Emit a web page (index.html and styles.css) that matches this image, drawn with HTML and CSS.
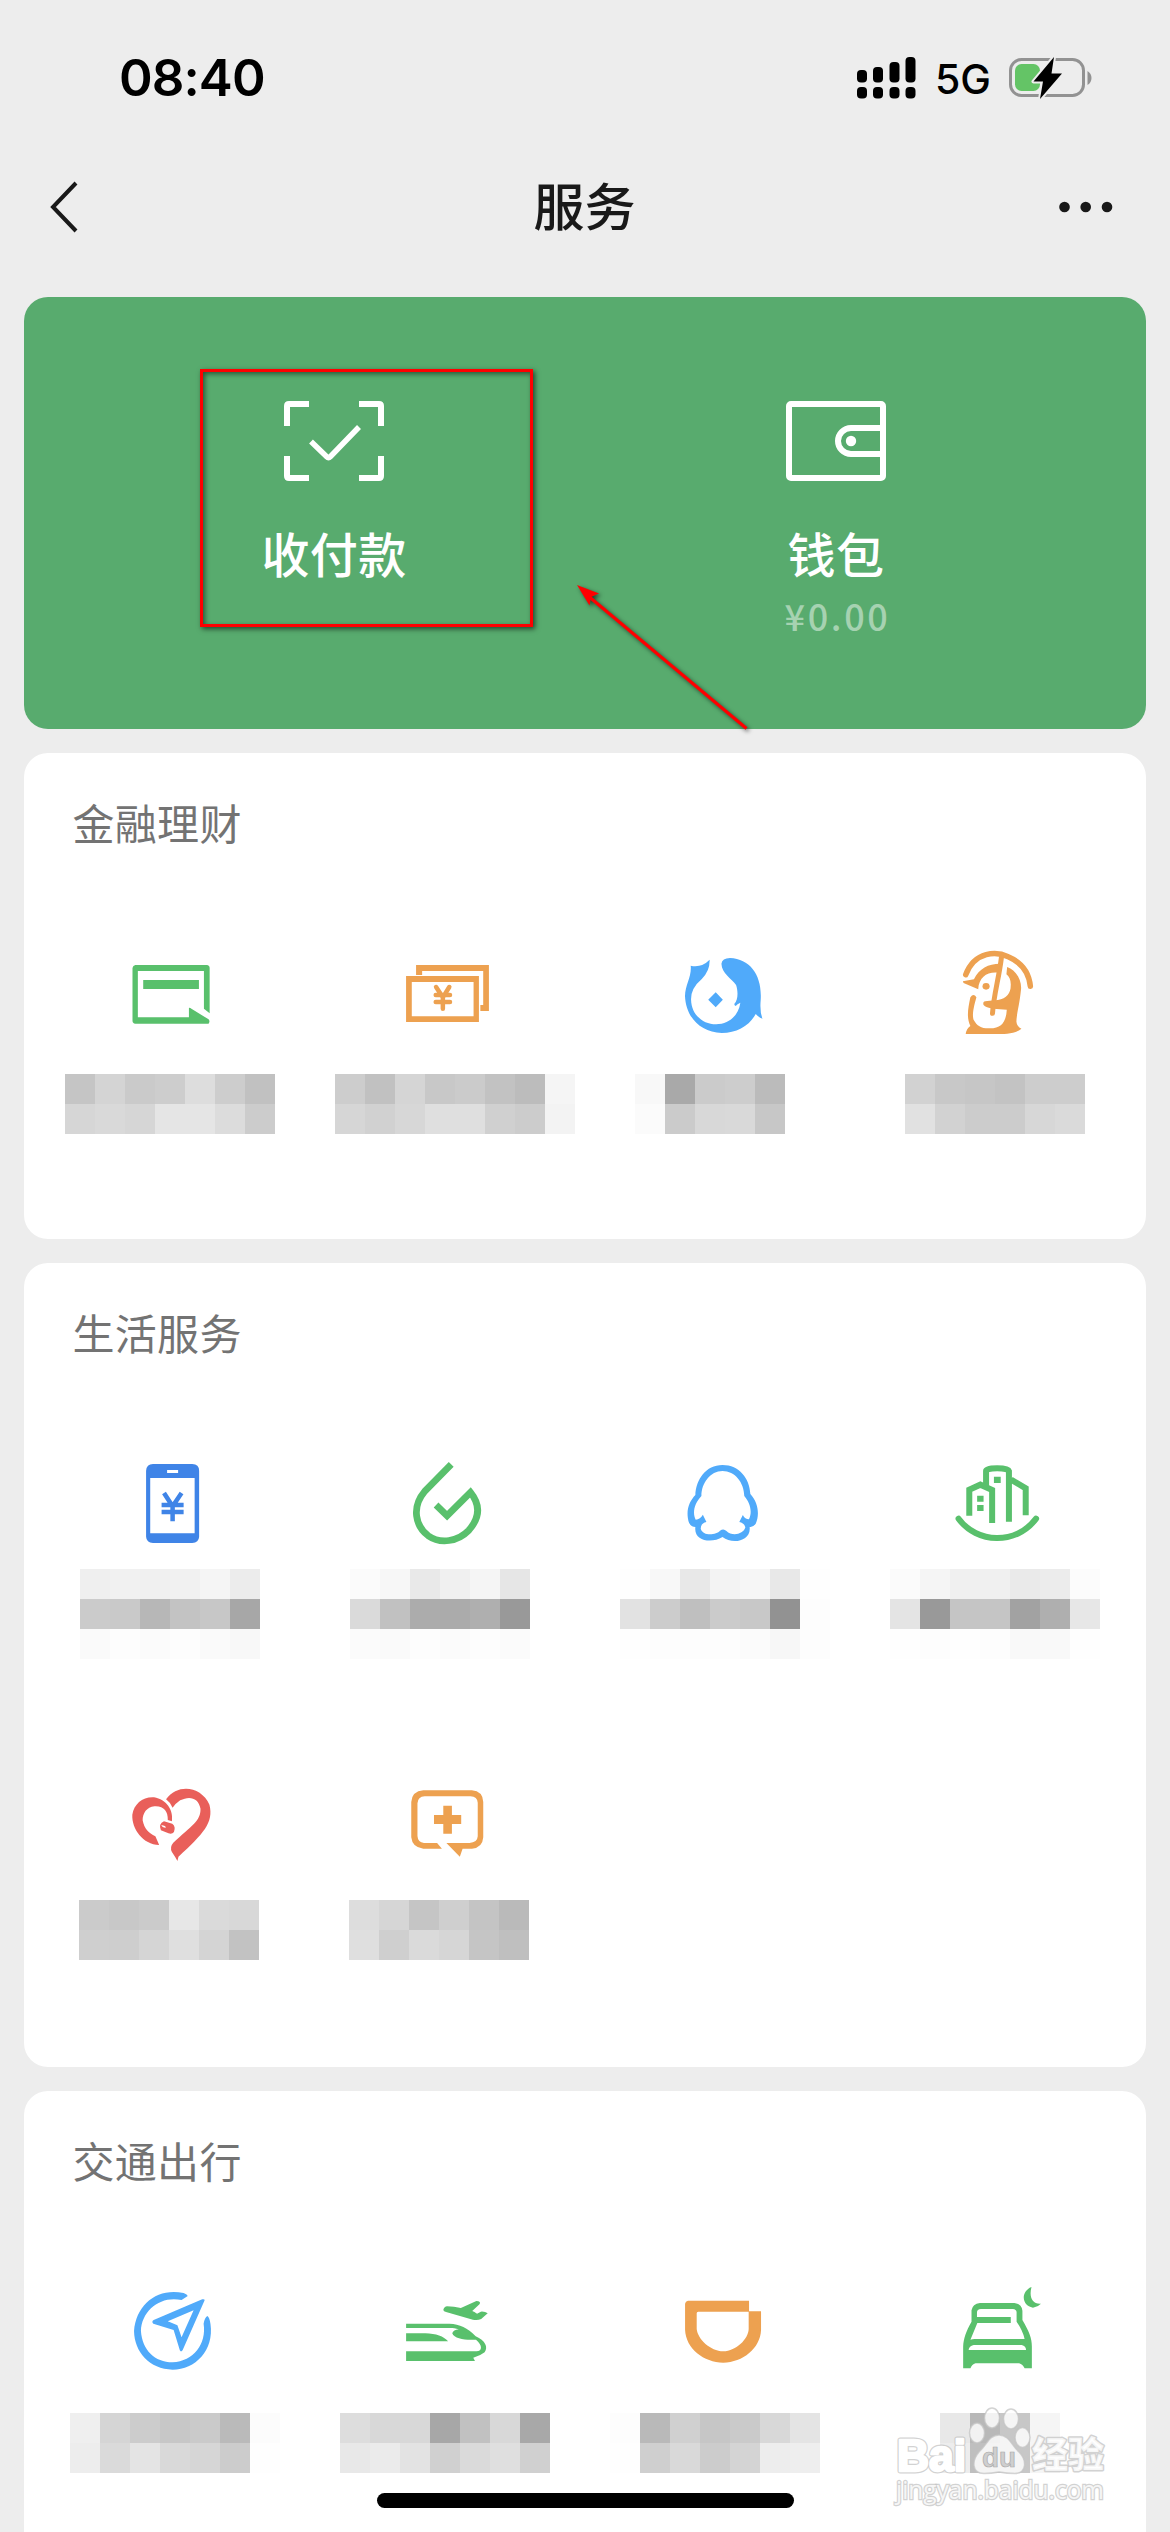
FILE: index.html
```html
<!DOCTYPE html>
<html lang="zh-CN">
<head>
<meta charset="utf-8">
<title>服务</title>
<link rel="stylesheet" href="styles.css">
</head>
<body>
<div class="phone">
  <header class="status">
    <span class="time">08:40</span>
    <div class="status-right">
      <svg class="signal" viewBox="0 0 59 42"><g fill="#000"><rect x="0" y="13" width="10" height="12.500" rx="4"/><rect x="16" y="10" width="10" height="15.500" rx="4"/><rect x="32.500" y="5" width="10" height="20.500" rx="4"/><rect x="48.500" y="0" width="10" height="25.500" rx="4"/><rect x="0" y="30" width="10" height="11.500" rx="4"/><rect x="16" y="30" width="10" height="11.500" rx="4"/><rect x="32.500" y="30" width="10" height="11.500" rx="4"/><rect x="48.500" y="30" width="10" height="11.500" rx="4"/></g></svg>
      <span class="net">5G</span>
      <svg class="battery" viewBox="0 0 84 42"><rect x="1.500" y="2.500" width="73" height="36" rx="11" fill="none" stroke="#929292" stroke-width="3"/><path d="M78.500 14q4 2.500 4 7t-4 7z" fill="#929292"/><rect x="6" y="7" width="25" height="27" rx="6.500" fill="#64c466"/><path d="M45 0 24.500 24.500H34L31 42 53 16.500H42.500z" fill="#000" stroke="#ededed" stroke-width="4" stroke-linejoin="round" paint-order="stroke"/></svg>
    </div>
  </header>
  <nav class="nav">
    <svg class="back" viewBox="0 0 30 52"><path d="M27 2 4 26 27 50" fill="none" stroke="#191919" stroke-width="4"/></svg>
    <h1>服务</h1>
    <svg class="more" viewBox="0 0 54 12"><g fill="#191919"><circle cx="5.500" cy="6" r="5.300"/><circle cx="26.700" cy="6" r="5.300"/><circle cx="48" cy="6" r="5.300"/></g></svg>
  </nav>
  <main>
    <section class="pay">
      <div class="pay-item">
        <svg class="pay-icon" viewBox="0 0 100 80"><g fill="none" stroke="#fff" stroke-width="6"><path d="M3 25V5q0-2 2-2H25M75 3H95q2 0 2 2V25M97 55V75q0 2-2 2H75M25 77H5q-2 0-2-2V55"/><path d="M27 40.500 42.500 55.500q2 2 4 0L75 26" stroke-width="5.500"/></g></svg>
        <span class="pay-name">收付款</span>
      </div>
      <div class="pay-item">
        <svg class="pay-icon" viewBox="0 0 100 80"><g fill="none" stroke="#fff" stroke-width="6"><rect x="3" y="3" width="94" height="74" rx="2"/><path d="M96 27H65a13 13 0 0 0 0 26H96"/></g><circle cx="65" cy="40" r="5.200" fill="#fff"/></svg>
        <span class="pay-name">钱包</span>
        <span class="balance">¥0.00</span>
      </div>
    </section>

    <section class="card finance">
      <h2>金融理财</h2>
      <div class="tiles row-a">
        <div class="tile">
          <svg class="icon green" viewBox="0 0 96 96"><g transform="translate(-83 -165) scale(.35714 .33333)"><path d="M267 555H467Q475 556 475 564V700L459 686V573H274V712H417V684Q419 682 424 686L472 718Q477 724 472 731H267Q259 730 259 722V564Q260 556 267 555ZM289 600H445V627H289Z" fill-rule="evenodd"/></g></svg>
          <div class="mosaic" data-x="32" data-rows="c5 d4 ca cd dd cd c1|d6 d9 d6 e5 e5 dc cc"></div>
        </div>
        <div class="tile">
          <svg class="icon orange" viewBox="0 0 96 96"><g transform="translate(-359 -165) scale(.35714 .33333)"><path d="M1053 585V555H1257V693H1233V675H1241V573H1070V585ZM1025 588H1229V726H1025ZM1041 606V709H1214V606Z" fill-rule="evenodd"/><path d="M1109 621 1128 652 1146 621M1108 645H1148M1108 666H1148M1128 648V686" class="line" stroke-width="4.500" stroke-linecap="round"/></g></svg>
          <div class="mosaic" data-x="26" data-rows="cd c1 d5 c8 cb c2 bc f5|d6 d1 d7 df df d0 cc f3"></div>
        </div>
        <div class="tile">
          <svg class="icon sky" viewBox="0 0 96 96"><g transform="translate(-75 -25) scale(.35714 .33333)"><path d="M254 137Q284 144 307 119Q308 153 285 177Q254 205 255 239C256 283 287 313 325 313C362 312 388 286 393 248Q384 252 380 258Q376 257 376 252C387 239 387 214 381 195C368 174 341 161 340 131Q342 115 364 114C421 117 454 166 450 239Q447 276 455 296Q446 294 436 282C418 318 383 339 341 339C280 337 240 290 238 228C239 192 257 170 254 137ZM324 217 344 239 324 262 303 239Z"/></g></svg>
          <div class="mosaic" data-x="50" data-rows="f8 a9 cb cd bb|fb cb d8 d9 c7"></div>
        </div>
        <div class="tile">
          <svg class="icon orange" viewBox="0 0 96 96"><g transform="translate(-351 -25) scale(.35714 .33333)"><path d="M1024 164C1050 92 1111 94 1143 110C1184 129 1202 163 1205 199" class="line" stroke-width="5.500" stroke-linecap="round"/><path d="M1124 112C1117 175 1103 221 1099 280" class="line" stroke-width="5" stroke-linecap="round"/><circle cx="1081" cy="199" r="10"/><path d="M1016 184 1047 178C1062 145 1087 131 1120 131L1116 158C1085 154 1061 170 1059 208L1018 189ZM1140 141C1163 150 1181 177 1179 207C1175 252 1166 284 1166 305Q1167 319 1180 326C1164 341 1134 342 1105 342H1024Q1026 326 1037 318C1026 293 1030 268 1037 232Q1046 218 1054 232C1045 266 1042 286 1046 299C1056 318 1068 326 1092 325C1125 325 1137 305 1139 269L1101 266Q1080 263 1074 255Q1070 243 1084 243L1114 240C1139 235 1150 219 1150 197C1151 181 1146 170 1138 163Z" fill-rule="evenodd"/></g></svg>
          <div class="mosaic" data-x="44" data-rows="d2 c8 c6 c3 cd cd|e1 d2 cc cc d7 da"></div>
        </div>
      </div>
    </section>

    <section class="card life">
      <h2>生活服务</h2>
      <div class="tiles row-b">
        <div class="tile">
          <svg class="icon blue" viewBox="0 0 96 96"><g transform="translate(-73 -19) scale(.34439 .33333)"><path d="M299 72H413Q433 73 433 92V290Q432 308 413 309H299Q280 308 279 290V92Q280 73 299 72ZM291 114V280H420V114ZM340 90V99H372V90Z" fill-rule="evenodd"/><path d="M331 159 356 199 382 159M324 195H388M324 216H388M356 193V244" class="line" stroke-width="4.500"/></g></svg>
          <div class="mosaic" data-x="47" data-rows="ef f1 f0 f1 f5 ec|cb c9 b7 c3 c7 a7|fa fd fb fd fa f8"></div>
        </div>
        <div class="tile">
          <svg class="icon green" viewBox="0 0 96 96"><g transform="translate(-349 -19) scale(.34439 .33333)"><path d="M1165 73 1088 154C1049 202 1061 258 1098 287C1134 313 1184 305 1216 271C1250 231 1249 193 1221 157L1153 227 1121 195" class="line" stroke-width="6.800"/></g></svg>
          <div class="mosaic" data-x="41" data-rows="fb f7 e9 f0 f5 e6|da c1 ac ab af 99|fb fa fd fb fd fb"></div>
        </div>
        <div class="tile">
          <svg class="icon sky" viewBox="0 0 96 96"><g transform="translate(-75 -19) scale(.35714 .33333)"><path d="M343 75C390 75 419 115 421 162C444 189 447 225 436 251Q428 263 419 261C422 289 400 303 378 303Q358 303 343 291C313 311 262 304 267 261Q249 261 246 234C242 205 252 182 267 165C269 119 296 75 343 75ZM343 93C309 93 284 129 284 168C264 190 258 219 268 239Q281 237 288 224L298 246Q282 250 282 266C289 291 327 284 336 272Q346 264 354 273C370 290 402 283 407 262Q404 249 390 246L400 225Q406 238 417 238C428 214 419 186 404 168C403 127 378 93 343 93Z" fill-rule="evenodd"/></g></svg>
          <div class="mosaic" data-x="35" data-rows="fe f8 e8 f3 f6 e8 fe|e2 cc bf cb c8 92 fd|fe fd fd fd fb f7 fd"></div>
        </div>
        <div class="tile">
          <svg class="icon green" viewBox="0 0 96 96"><g transform="translate(-351 -19) scale(.35714 .33333)"><g class="line" stroke-width="6"><path d="M1081 142V93Q1081 85 1112 85T1145 93V245M1034 227V149L1065 134 1098 150V249M1151 119 1192 145V226"/><path d="M1004 236C1055 311 1165 316 1221 236" stroke-linecap="round"/></g><path d="M1103 110H1122V129H1103ZM1056 167H1074V185H1056ZM1056 195H1074V213H1056Z"/></g></svg>
          <div class="mosaic" data-x="29" data-rows="fb f5 f0 f0 ea ec fc|e4 99 c5 c5 a2 af e7|fe fd fe fd f9 f9 fe"></div>
        </div>
      </div>
      <div class="tiles row-c">
        <div class="tile">
          <svg class="icon red" viewBox="0 0 96 96"><g transform="translate(-73 -16) scale(.34439 .33333)"><path d="M317 255C270 253 237 207 239 164C244 132 269 110 302 112C338 118 359 150 354 184L342 180C343 154 330 137 303 139C281 141 269 160 269 181C274 207 286 219 306 229ZM337 118C373 68 440 81 463 134C476 188 445 221 373 290L370 303Q364 291 354 276Q347 261 358 248C411 197 438 183 437 146C431 112 404 107 378 121Q365 130 356 143Q351 129 337 118ZM331 184 355 191Q366 199 360 216Q354 224 344 220L322 211Q314 192 331 184ZM323 195Q326 204 336 203Q337 197 323 195Z" fill-rule="evenodd"/></g></svg>
          <div class="mosaic" data-x="46" data-rows="cb c8 cb e7 da d8|cf ce d5 df d4 c2"></div>
        </div>
        <div class="tile">
          <svg class="icon orange" viewBox="0 0 96 96"><g transform="translate(-349 -16) scale(.34439 .33333)"><path d="M1084 91H1225Q1257 94 1258 126V232Q1256 264 1225 266H1198L1190 290 1151 249H1218Q1241 248 1242 229V128Q1241 110 1221 109H1088Q1068 110 1067 130V228Q1068 247 1086 249H1124L1138 266H1084Q1052 263 1049 232V126Q1051 94 1084 91ZM1142 137H1167V165H1194V192H1167V221H1142V192H1115V165H1142Z" fill-rule="evenodd"/></g></svg>
          <div class="mosaic" data-x="40" data-rows="dd d6 c5 cf c4 ba|df cf da d6 c5 bf"></div>
        </div>
      </div>
    </section>

    <section class="card travel">
      <h2>交通出行</h2>
      <div class="tiles row-d">
        <div class="tile">
          <svg class="icon sky" viewBox="0 0 96 96"><g transform="translate(-73 -15) scale(.34439 .33333)"><path d="M388 69Q399 73 400 78L382 90C322 76 266 120 264 183C268 240 304 277 356 277C417 273 455 222 446 161Q449 143 457 138Q463 141 466 162C477 241 422 299 356 299C289 297 245 246 244 183C250 102 313 52 388 69ZM449 91 385 241Q380 248 377 241L359 180 300 161Q294 155 301 150L442 88Q450 87 449 91ZM417 121 342 154 370 166 382 202Z" fill-rule="evenodd"/></g></svg>
          <div class="mosaic" data-x="37" data-rows="ef d5 cc c7 ca ba fc|ed da e4 d9 d6 cc fe"></div>
        </div>
        <div class="tile">
          <svg class="icon green" viewBox="0 0 96 96"><g transform="translate(-349 -15) scale(.34439 .33333)"><path d="M1034 161H1160C1190 163 1212 172 1236 199C1264 211 1273 232 1262 247Q1249 258 1229 263L1234 273H1034V244H1238C1257 243 1255 224 1237 209C1209 211 1174 208 1168 190Q1171 180 1187 178C1174 173 1164 174 1154 174H1034ZM1034 190H1090C1121 191 1143 199 1156 214H1034ZM1142 120Q1145 109 1153 109L1173 110 1193 114 1238 93Q1253 94 1247 103L1226 123Q1232 125 1240 131L1251 125Q1263 124 1271 130L1252 147Q1241 152 1228 149L1150 126Q1143 124 1142 120Z" fill-rule="evenodd"/></g></svg>
          <div class="mosaic" data-x="31" data-rows="dd d8 d8 a7 c1 d8 a8|e8 eb e3 d0 da df d0"></div>
        </div>
        <div class="tile">
          <svg class="icon orange" viewBox="0 0 96 96"><g transform="translate(-75 -15) scale(.36352 .33333)"><path d="M242 92H410V124H443V180C441 235 393 277 339 278C286 277 236 236 234 179V101Q235 93 242 92ZM270 125Q266 126 266 130V177C269 208 303 243 339 244C375 243 408 207 409 177V125Z" fill-rule="evenodd"/></g></svg>
          <div class="mosaic" data-x="25" data-rows="fd b9 d0 c6 ca d8 e4|fe cf d9 cc d4 ed ee"></div>
        </div>
        <div class="tile">
          <svg class="icon green" viewBox="0 0 96 96"><g transform="translate(-351 -15) scale(.36352 .33333)"><path d="M1045 99H1140Q1160 102 1162 122V150C1180 184 1188 204 1188 229V295H1168Q1163 283 1153 280H1033Q1023 283 1019 295H999V229C1000 206 1007 184 1022 155V121Q1025 101 1045 99ZM1048 117Q1037 118 1037 127V141H1130V159H1038L1019 209Q1024 207 1031 207H1168Q1163 181 1146 155V126Q1145 118 1136 117ZM1014 240H1172Q1172 228 1160 225H1028Q1015 228 1014 240ZM1187 51C1180 79 1188 103 1213 101Q1205 111 1191 113C1159 107 1157 64 1187 51Z" fill-rule="evenodd"/></g></svg>
          <div class="mosaic" data-x="79" data-rows="e8 b8 c7 f5|ed bf c7 f5"></div>
        </div>
      </div>
    </section>
  </main>

  <div class="highlight"></div>
  <svg class="arrow" viewBox="0 0 190 160"><path d="M171.500 145.500 15 14.500" stroke="#f00" stroke-width="3.200"/><path d="M2 2 24 10.500 16 14 14.500 22.500z" fill="#f00"/></svg>
  <div class="home-bar"></div>
  <svg class="watermark" viewBox="0 0 220 110">
    <g fill="#fff" fill-opacity=".82" stroke="#c4c4c4" stroke-opacity=".75" stroke-width="1.500">
      <g stroke-linejoin="round" paint-order="stroke">
        <text x="6" y="70" font-size="45" font-weight="700" stroke-width="5" textLength="69" lengthAdjust="spacingAndGlyphs">Bai</text>
        <text x="6" y="70" font-size="45" font-weight="700" fill-opacity="1" stroke="#fff" stroke-opacity="1" stroke-width="2.500" textLength="69" lengthAdjust="spacingAndGlyphs" aria-hidden="true">Bai</text>
        <text x="141" y="67" font-size="36" font-weight="900" stroke-width="3" class="cjk">经验</text>
      </g>
      <ellipse cx="86" cy="32" rx="7.500" ry="10"/><ellipse cx="101" cy="17" rx="7.500" ry="10"/><ellipse cx="120" cy="18" rx="7.500" ry="10"/><ellipse cx="131.500" cy="36.500" rx="7.500" ry="10"/>
      <path d="M108 34C118 34 121 45 128 51C136 59 136 72 124 72.500Q116 72.500 108 71Q100 72.500 93 72.500C80 72 81 59 88 51C96 44 98 34 108 34Z"/>
      <text x="5" y="98" font-size="25" stroke-width="2.500" paint-order="stroke" font-family="'Open Sans','Noto Sans',sans-serif" textLength="208" lengthAdjust="spacingAndGlyphs">jingyan.baidu.com</text>
    </g>
    <text x="91" y="66" font-size="28" fill="#cfcfcf" stroke="#aaa" stroke-width=".7" font-weight="700" textLength="34" lengthAdjust="spacingAndGlyphs">du</text>
  </svg>
</div>
<script src="mosaic.js"></script>
</body>
</html>
```
FILE: styles.css
```css
* { box-sizing: border-box; }
body {
  margin: 0;
  background: #ededed;
  font-family: Inter, "Noto Sans CJK SC", sans-serif;
}
.phone {
  position: relative;
  width: 1170px;
  height: 2532px;
  overflow: hidden;
}
svg { display: block; flex: none; }

.status {
  display: flex;
  justify-content: space-between;
  align-items: center;
  height: 155px;
  padding: 0 77px 0 119px;
  color: #000;
}
.time { font-size: 51px; font-weight: 600; letter-spacing: -.9px; }
.status-right { display: flex; align-items: center; }
.signal { width: 59px; height: 42px; }
.net { width: 58px; margin: 2px 16px 0 19px; font-size: 41px; font-weight: 500; line-height: 48px; white-space: nowrap; }
.battery { width: 84px; height: 42px; }

.nav {
  display: flex;
  justify-content: space-between;
  align-items: center;
  height: 104px;
  padding: 0 57px 0 49px;
}
.back { width: 30px; height: 52px; }
.more { width: 54px; height: 12px; }
.nav h1 {
  flex: 1;
  margin: 0;
  padding: 0 0 5px 31px;
  color: #191919;
  font: 500 51px/99px "Noto Sans CJK SC", sans-serif;
  text-align: center;
}

main {
  display: flex;
  flex-direction: column;
  gap: 24px;
  padding: 38px 24px 0;
}
.pay {
  display: flex;
  height: 432px;
  padding: 104px 59px 0;
  background: #58ab6e;
  border-radius: 24px;
  color: #fff;
}
.pay-item { display: flex; flex: 1; flex-direction: column; align-items: center; }
.pay-icon { width: 100px; height: 80px; }
.pay-name { margin-top: 35px; font: 500 48px/72px "Noto Sans CJK SC", sans-serif; letter-spacing: .4px; }
.balance {
  margin-top: 9px;
  padding-left: 3px;
  color: rgba(255, 255, 255, .47);
  font: 500 36px/36px "Noto Sans CJK SC", sans-serif;
  letter-spacing: 2.600px;
}

.card { padding: 0 9px; background: #fff; border-radius: 24px; }
.card h2 {
  height: 142px;
  margin: 0;
  padding-left: 39.500px;
  color: #737373;
  font: 400 42px/138px "Noto Sans CJK SC", sans-serif;
  letter-spacing: .3px;
}
.finance { height: 486px; }
.life { height: 804px; }
.travel { height: 520px; }

.tiles { display: grid; grid-template-columns: repeat(4, 276px); }
.tile { display: flex; flex-direction: column; }
.row-a { padding-top: 50px; }
.row-b { padding-top: 54px; }
.row-c { padding-top: 117px; }
.row-d { padding-top: 52px; }
.row-a .tile { gap: 33px; }
.row-b .tile { gap: 14px; }
.row-c .tile { gap: 28px; }
.row-d .tile { gap: 32px; }

.icon { width: 96px; height: 96px; align-self: center; overflow: visible; fill: currentColor; }
.line { fill: none; stroke: currentColor; }
.line, .line path { vector-effect: non-scaling-stroke; }
.green { color: #59c06c; }
.orange { color: #eda150; }
.sky { color: #50aafa; }
.blue { color: #3f84e7; }
.red { color: #e95f5a; }

.mosaic { display: grid; grid-auto-rows: 30px; }

.highlight {
  position: absolute;
  left: 200px;
  top: 369px;
  width: 333px;
  height: 258px;
  border: 3px solid #f00;
  box-shadow: 2px 2px 5px rgba(0, 0, 0, .6), inset 2px 2px 5px rgba(0, 0, 0, .5);
}
.arrow {
  position: absolute;
  left: 575px;
  top: 583px;
  width: 190px;
  height: 160px;
  filter: drop-shadow(2px 2px 2px rgba(0, 0, 0, .6));
}
.home-bar {
  position: absolute;
  left: 377px;
  top: 2493px;
  width: 417px;
  height: 15px;
  border-radius: 8px;
  background: #000;
}
.watermark {
  position: absolute;
  left: 891px;
  top: 2401px;
  width: 220px;
  height: 110px;
  font-family: "Liberation Sans", sans-serif;
}
.cjk { font-family: "Noto Sans CJK SC", sans-serif; }
```
FILE: mosaic.js
```js
// Builds each pixelated label from its rows of grey levels.
document.querySelectorAll('.mosaic').forEach(function (el) {
  var rows = el.dataset.rows.split('|').map(function (r) { return r.split(' '); });
  el.style.marginLeft = el.dataset.x + 'px';
  el.style.gridTemplateColumns = 'repeat(' + rows[0].length + ', 30px)';
  rows.forEach(function (row) {
    row.forEach(function (g) {
      var cell = document.createElement('i');
      cell.style.background = '#' + g + g + g;
      el.appendChild(cell);
    });
  });
});
```
